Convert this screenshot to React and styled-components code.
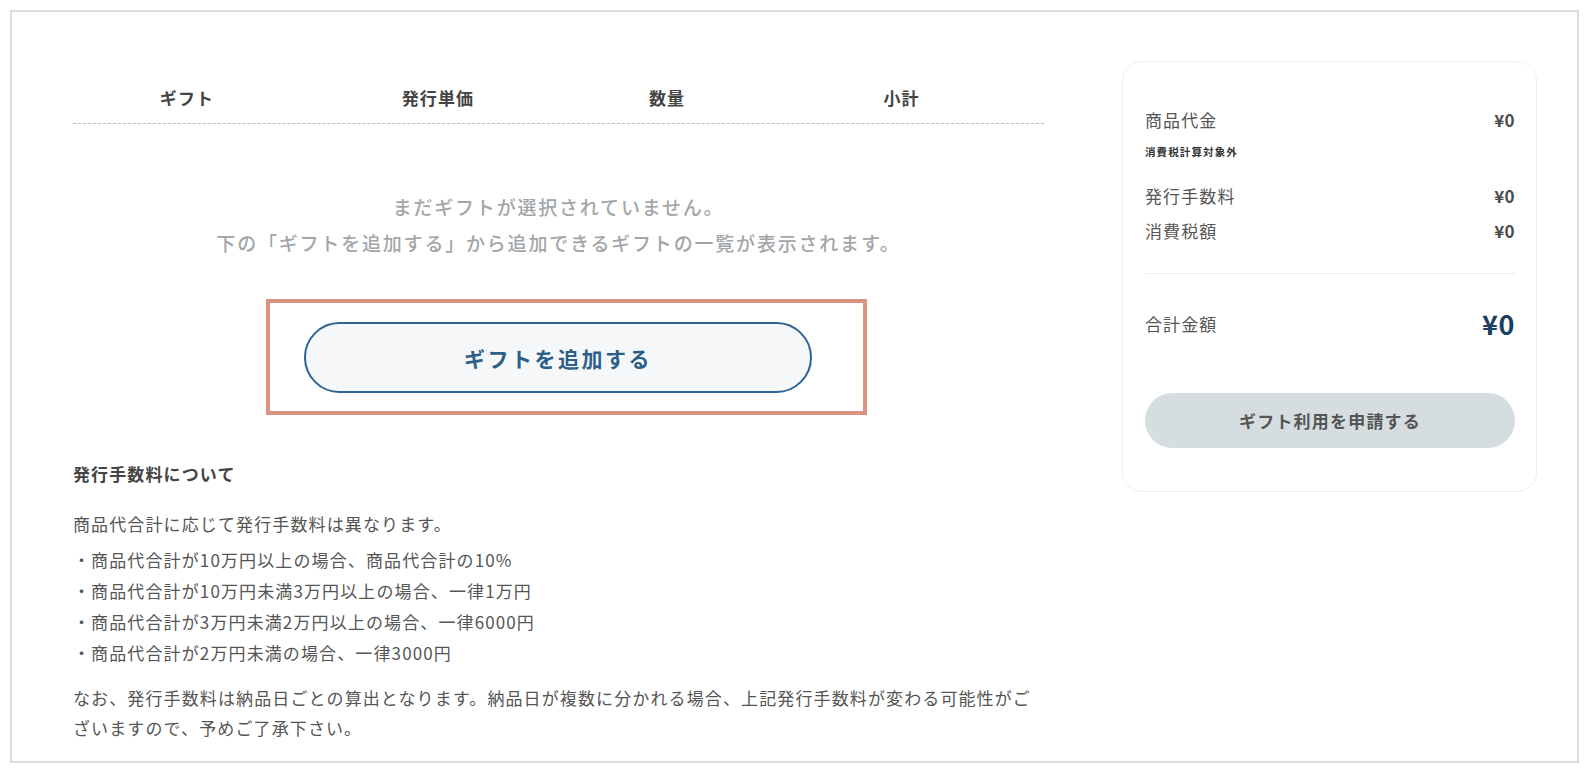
import React from 'react';
import styled, { createGlobalStyle } from 'styled-components';

const GlobalStyle = createGlobalStyle`
  body {
    margin: 0;
    background: #fff;
    font-family: "Noto Sans CJK JP", "Noto Sans", sans-serif;
    color: #4a4a4a;
    letter-spacing: 0.07em;
  }
`;

const Frame = styled.div`
  margin: 10px 11px 10px 10px;
  border: 2px solid #dcdcdc;
  padding: 49px 41px 18px 61px;
  display: grid;
  grid-template-columns: 971px 415px;
  column-gap: 78px;
  align-items: start;
`;

const Main = styled.div`
  display: flex;
  flex-direction: column;
`;

const TableHead = styled.div`
  display: grid;
  grid-template-columns: 228px 274px 184px 1fr;
  padding: 25px 0 13px;
  border-bottom: 1px dashed #bdbdbd;
`;

const HeadCell = styled.div`
  text-align: center;
  font-size: 17px;
  line-height: 24px;
  font-weight: 700;
  color: #444;
`;

const Empty = styled.p`
  margin: 65px 0 0;
  text-align: center;
  font-size: 19px;
  line-height: 36px;
  font-weight: 500;
  letter-spacing: 0.095em;
  color: #a2a6a9;
`;

const Highlight = styled.div`
  align-self: flex-start;
  margin: 38px 0 0 193px;
  border: 4px solid #dc9480;
  padding: 19px 51px 18px 34px;
`;

const AddButton = styled.button`
  display: block;
  width: 508px;
  height: 71px;
  border: 2px solid #2e6393;
  border-radius: 36px;
  background: #f5f7f9;
  color: #2c5e8a;
  font-family: inherit;
  font-size: 21px;
  font-weight: 700;
  letter-spacing: 0.12em;
  cursor: pointer;
`;

const NoteTitle = styled.h3`
  margin: 47px 0 0;
  font-size: 17px;
  line-height: 24px;
  font-weight: 700;
  color: #444;
`;

const NoteText = styled.p`
  margin: ${({ $top }) => $top}px 0 0;
  font-size: 17px;
  line-height: ${({ $lh }) => $lh || 31}px;
  color: #555;
`;

const NoteList = styled.ul`
  margin: 5px 0 0;
  padding: 0;
  list-style: none;
`;

const NoteItem = styled.li`
  font-size: 17px;
  line-height: 31px;
  color: #555;
`;

const Card = styled.aside`
  border: 1px solid #eeeeee;
  border-radius: 20px;
  padding: 46px 21px 43px 22px;
  display: flex;
  flex-direction: column;
`;

const Row = styled.div`
  display: flex;
  justify-content: space-between;
  align-items: center;
  margin-top: ${({ $top }) => $top || 0}px;
  font-size: 17px;
  line-height: 24px;
  color: #555;
`;

const Amount = styled.span`
  font-weight: 700;
  letter-spacing: 0.02em;
  color: #4a4a4a;
`;

const Note = styled.div`
  margin-top: 12px;
  font-size: 10.5px;
  line-height: 16px;
  font-weight: 700;
  color: #333;
`;

const Divider = styled.hr`
  margin: 30px 0 0;
  border: 0;
  border-top: 1px solid #eeeeee;
`;

const TotalRow = styled(Row)`
  line-height: 36px;
`;

const Total = styled.span`
  font-size: 27px;
  font-weight: 700;
  letter-spacing: 0.02em;
  color: #1c3e62;
`;

const ApplyButton = styled.button`
  margin-top: 51px;
  height: 55px;
  border: 0;
  border-radius: 28px;
  background: #d6dde1;
  color: #555;
  font-family: inherit;
  font-size: 17px;
  font-weight: 700;
  letter-spacing: 0.07em;
`;

const fees = [
  '・商品代合計が10万円以上の場合、商品代合計の10%',
  '・商品代合計が10万円未満3万円以上の場合、一律1万円',
  '・商品代合計が3万円未満2万円以上の場合、一律6000円',
  '・商品代合計が2万円未満の場合、一律3000円',
];

const App = () => (
  <>
    <GlobalStyle />
    <Frame>
      <Main>
        <TableHead>
          <HeadCell>ギフト</HeadCell>
          <HeadCell>発行単価</HeadCell>
          <HeadCell>数量</HeadCell>
          <HeadCell>小計</HeadCell>
        </TableHead>
        <Empty>
          まだギフトが選択されていません。
          <br />
          下の「ギフトを追加する」から追加できるギフトの一覧が表示されます。
        </Empty>
        <Highlight>
          <AddButton type="button">ギフトを追加する</AddButton>
        </Highlight>
        <NoteTitle>発行手数料について</NoteTitle>
        <NoteText $top={22}>商品代合計に応じて発行手数料は異なります。</NoteText>
        <NoteList>
          {fees.map(fee => (
            <NoteItem key={fee}>{fee}</NoteItem>
          ))}
        </NoteList>
        <NoteText $top={15} $lh={30}>
          なお、発行手数料は納品日ごとの算出となります。納品日が複数に分かれる場合、上記発行手数料が変わる可能性がございますので、予めご了承下さい。
        </NoteText>
      </Main>
      <Card>
        <Row>
          <span>商品代金</span>
          <Amount>¥0</Amount>
        </Row>
        <Note>消費税計算対象外</Note>
        <Row $top={24}>
          <span>発行手数料</span>
          <Amount>¥0</Amount>
        </Row>
        <Row $top={11}>
          <span>消費税額</span>
          <Amount>¥0</Amount>
        </Row>
        <Divider />
        <TotalRow $top={32}>
          <span>合計金額</span>
          <Total>¥0</Total>
        </TotalRow>
        <ApplyButton type="button">ギフト利用を申請する</ApplyButton>
      </Card>
    </Frame>
  </>
);

export default App;
